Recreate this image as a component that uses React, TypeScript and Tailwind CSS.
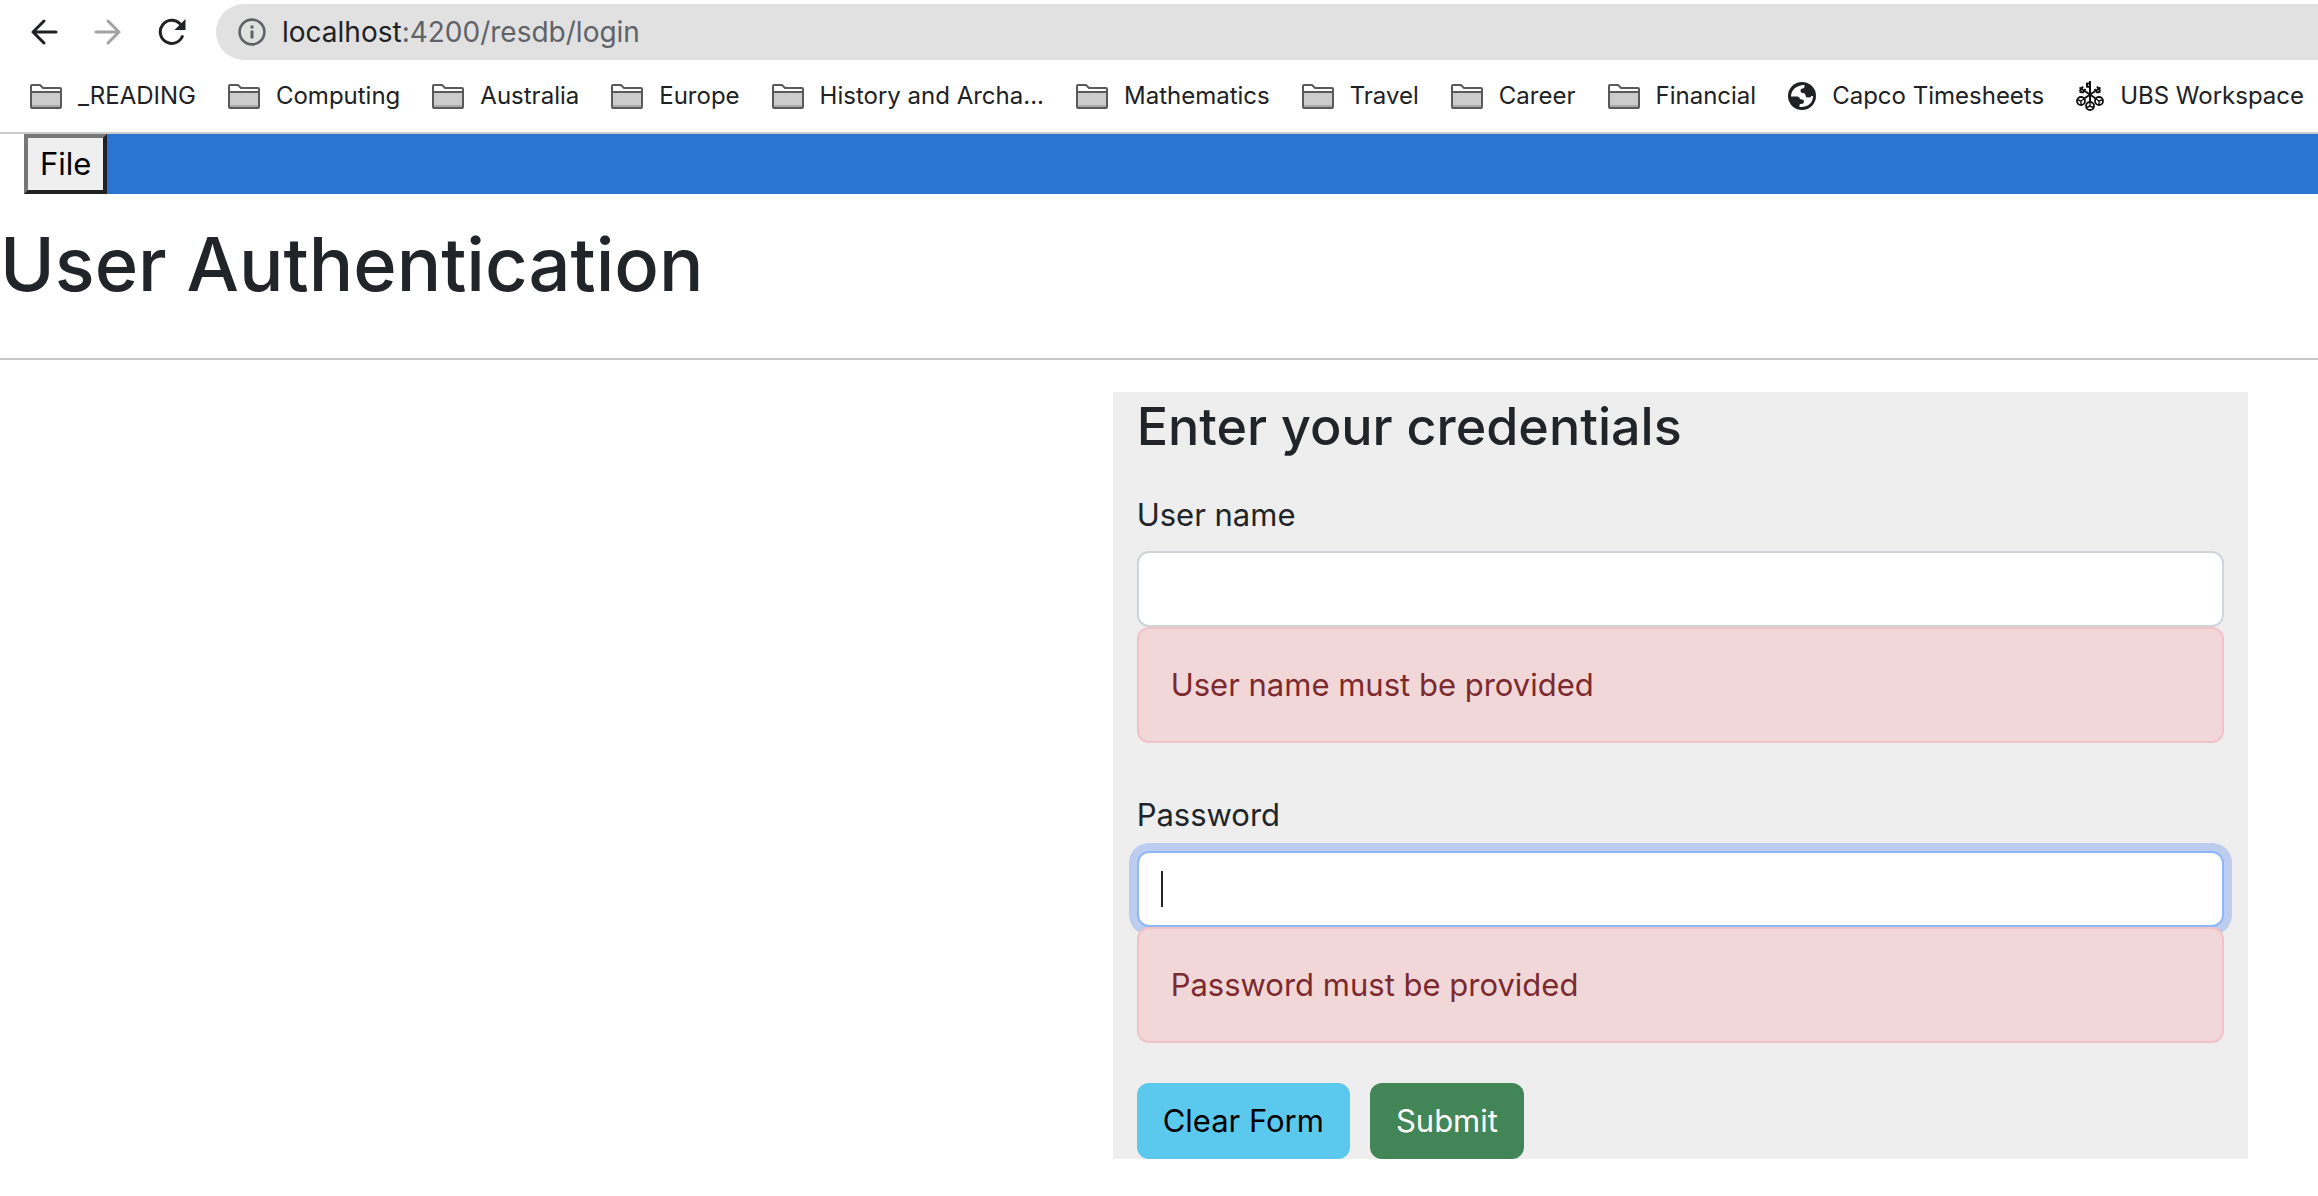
import type { ReactNode } from "react";

const folders = [
  "_READING",
  "Computing",
  "Australia",
  "Europe",
  "History and Archa...",
  "Mathematics",
  "Travel",
  "Career",
  "Financial",
];

function BackIcon() {
  return (
    <svg width="28" height="28" viewBox="0 0 28 28" fill="none" stroke="currentColor" strokeWidth="3" strokeLinecap="round" strokeLinejoin="round" aria-hidden="true">
      <path d="M26 14H3M14 3L3 14L14 25" />
    </svg>
  );
}

function ForwardIcon() {
  return (
    <svg width="28" height="28" viewBox="0 0 28 28" fill="none" stroke="currentColor" strokeWidth="3" strokeLinecap="round" strokeLinejoin="round" aria-hidden="true">
      <path d="M2 14H25M14 3L25 14L14 25" />
    </svg>
  );
}

function ReloadIcon() {
  return (
    <svg width="28" height="28" viewBox="0 0 28 28" aria-hidden="true">
      <path d="M24.3 18.5A11.5 11.5 0 1 1 22 5.8" fill="none" stroke="currentColor" strokeWidth="3" strokeLinecap="round" />
      <path d="M27.5 1V12H16.5Z" fill="currentColor" />
    </svg>
  );
}

function InfoIcon() {
  return (
    <svg width="28" height="28" viewBox="0 0 28 28" className="shrink-0" aria-hidden="true">
      <circle cx="14" cy="14" r="12.4" fill="none" stroke="#5f6368" strokeWidth="2.6" />
      <path d="M12.5 7.5H15.5V10.5H12.5ZM12.5 12.5H15.5V20.5H12.5Z" fill="#5f6368" />
    </svg>
  );
}

function FolderIcon() {
  return (
    <svg width="32" height="25" viewBox="0 0 32 25" className="shrink-0" aria-hidden="true">
      <path d="M1 23V2Q1 1 2 1H10L13 4H30Q31 4 31 5V8H1Z" fill="#fff" />
      <path d="M1 8H31V24H1Z" fill="#ccc" />
      <path d="M1 21H31V24H1Z" fill="#aaa" />
      <path d="M1 8H31M2 24H30Q31 24 31 23V5Q31 4 30 4H13L10 1H2Q1 1 1 2V23Q1 24 2 24Z" fill="none" stroke="#5a5a5a" strokeWidth="2" />
    </svg>
  );
}

function GlobeIcon() {
  return (
    <svg width="28" height="28" viewBox="0 0 28 28" className="shrink-0" aria-hidden="true">
      <circle cx="14" cy="14" r="14" fill="#202124" />
      <path
        d="M3 14.5C3 8 8.500 3 16.500 3V4.500Q16.500 6.500 14.500 6.500Q12.500 6.500 12.500 8.500Q12.500 11 15 11Q17.500 11 17.500 13Q17.500 15.500 20 15.500Q23 15.500 23.500 14H25C25 21 20 25.500 11.500 25V23Q11.500 22 12.500 22Q16 22 16 19.500Q16 17.500 14 17.500Q12 17.500 11.500 16Q11 14.500 9.500 14.500Z"
        fill="#fff"
      />
    </svg>
  );
}

function KeysIcon() {
  return (
    <svg width="28" height="30" viewBox="0 0 28 30" className="shrink-0" fill="none" stroke="#111" aria-hidden="true">
      <path d="M14 0V20M3.500 6.500L20.500 18M24.500 6.500L7.500 18" strokeWidth="2" />
      <path d="M10.500 2.500H14M10.500 5.800H14M11 2V6.500" strokeWidth="2" />
      <path d="M3.500 10.500L7 5.500M6.500 12L9.500 8M3.500 10.500L6.500 11.500M24.500 10.500L21 5.500M21.500 12L18.500 8M24.500 10.500L21.500 11.500" strokeWidth="2" />
      <circle cx="5" cy="20" r="4" strokeWidth="1.800" />
      <circle cx="23" cy="20" r="4" strokeWidth="1.800" />
      <circle cx="14" cy="25" r="4" strokeWidth="1.800" />
      <path d="M5 20L8 18M5 20L2 19M5 20V24M23 20L20 18M23 20L26 19M23 20V24M14 25V20M14 25L11 26.500M14 25L17 26.500" strokeWidth="1.400" />
    </svg>
  );
}

function Bookmark({ icon, children }: { icon: ReactNode; children: ReactNode }) {
  return (
    <a href="#" className="flex items-center gap-4 whitespace-nowrap">
      {icon}
      {children}
    </a>
  );
}

type FieldProps = { id: string; label: string; type: string; error: string; focused?: boolean };

function Field({ id, label, type, error, focused }: FieldProps) {
  return (
    <div className="flex flex-col">
      <label htmlFor={id} className="mb-3 self-start">
        {label}
      </label>
      <div className="relative flex">
        <input
          id={id}
          type={type}
          autoFocus={focused}
          className="h-19 w-full rounded-xl border-2 border-[#ced4d9] bg-white px-6 caret-transparent outline-none focus:border-[#8eb7f9] focus:ring-8 focus:ring-[#bdcdef]"
        />
        {focused && <span className="pointer-events-none absolute top-5 left-6 h-9 w-0.5 bg-[#212529]" />}
      </div>
      <p role="alert" className="relative rounded-xl border-2 border-[#efc3c8] bg-[#f2d7d9] px-8 py-8 text-[#7b2a2f]">
        {error}
      </p>
    </div>
  );
}

export default function App() {
  return (
    <div className="min-h-screen bg-white font-['Inter',sans-serif] text-[31px] leading-[48px] text-[#212529]">
      <header className="border-b-2 border-[#ccc] pt-1 text-[#202124]">
        <div className="flex items-center">
          <nav className="flex items-center gap-9 px-[30px]" aria-label="History">
            <button type="button" aria-label="Back">
              <BackIcon />
            </button>
            <button type="button" aria-label="Forward" className="text-[#a3a3a3]">
              <ForwardIcon />
            </button>
            <button type="button" aria-label="Reload">
              <ReloadIcon />
            </button>
          </nav>
          <div className="flex h-14 flex-1 items-center gap-4 rounded-l-full bg-[#e1e1e1] pl-[22px] text-[28px]">
            <InfoIcon />
            <div role="textbox" aria-label="Address" tabIndex={0} className="flex-1 text-[#5f6368]">
              <span className="text-[#202124]">localhost</span>:4200/resdb/login
            </div>
          </div>
        </div>
        <nav className="flex h-18 items-center gap-8 pl-[30px] text-[24px]" aria-label="Bookmarks">
          {folders.map((name) => (
            <Bookmark key={name} icon={<FolderIcon />}>
              {name}
            </Bookmark>
          ))}
          <Bookmark icon={<GlobeIcon />}>Capco Timesheets</Bookmark>
          <Bookmark icon={<KeysIcon />}>UBS Workspace</Bookmark>
        </nav>
      </header>

      <div className="ml-6 flex bg-[#2a74d2]">
        <button
          type="button"
          className="border-4 border-t-[#767676] border-r-[#222] border-b-[#222] border-l-[#767676] bg-[#efefef] px-3 py-0.5 text-black"
        >
          File
        </button>
      </div>

      <main>
        <h1 className="mt-[22px] text-[74px] leading-[96px] font-medium">User Authentication</h1>
        <hr className="mt-[46px] mb-8 border-t-2 border-[#c8c8c8]" />
        <form className="ml-[48%] w-[49%] bg-[#eee] px-6">
          <h2 className="mb-[30px] text-[52px] leading-[69px] font-medium">Enter your credentials</h2>
          <div className="flex flex-col gap-12">
            <Field id="username" label="User name" type="text" error="User name must be provided" />
            <Field id="password" label="Password" type="password" error="Password must be provided" focused />
          </div>
          <div className="mt-10 flex gap-5">
            <button type="reset" className="h-19 rounded-xl bg-[#5bc8ed] px-[26px] text-black">
              Clear Form
            </button>
            <button type="submit" className="h-19 rounded-xl bg-[#428557] px-[26px] text-white">
              Submit
            </button>
          </div>
        </form>
      </main>
    </div>
  );
}
